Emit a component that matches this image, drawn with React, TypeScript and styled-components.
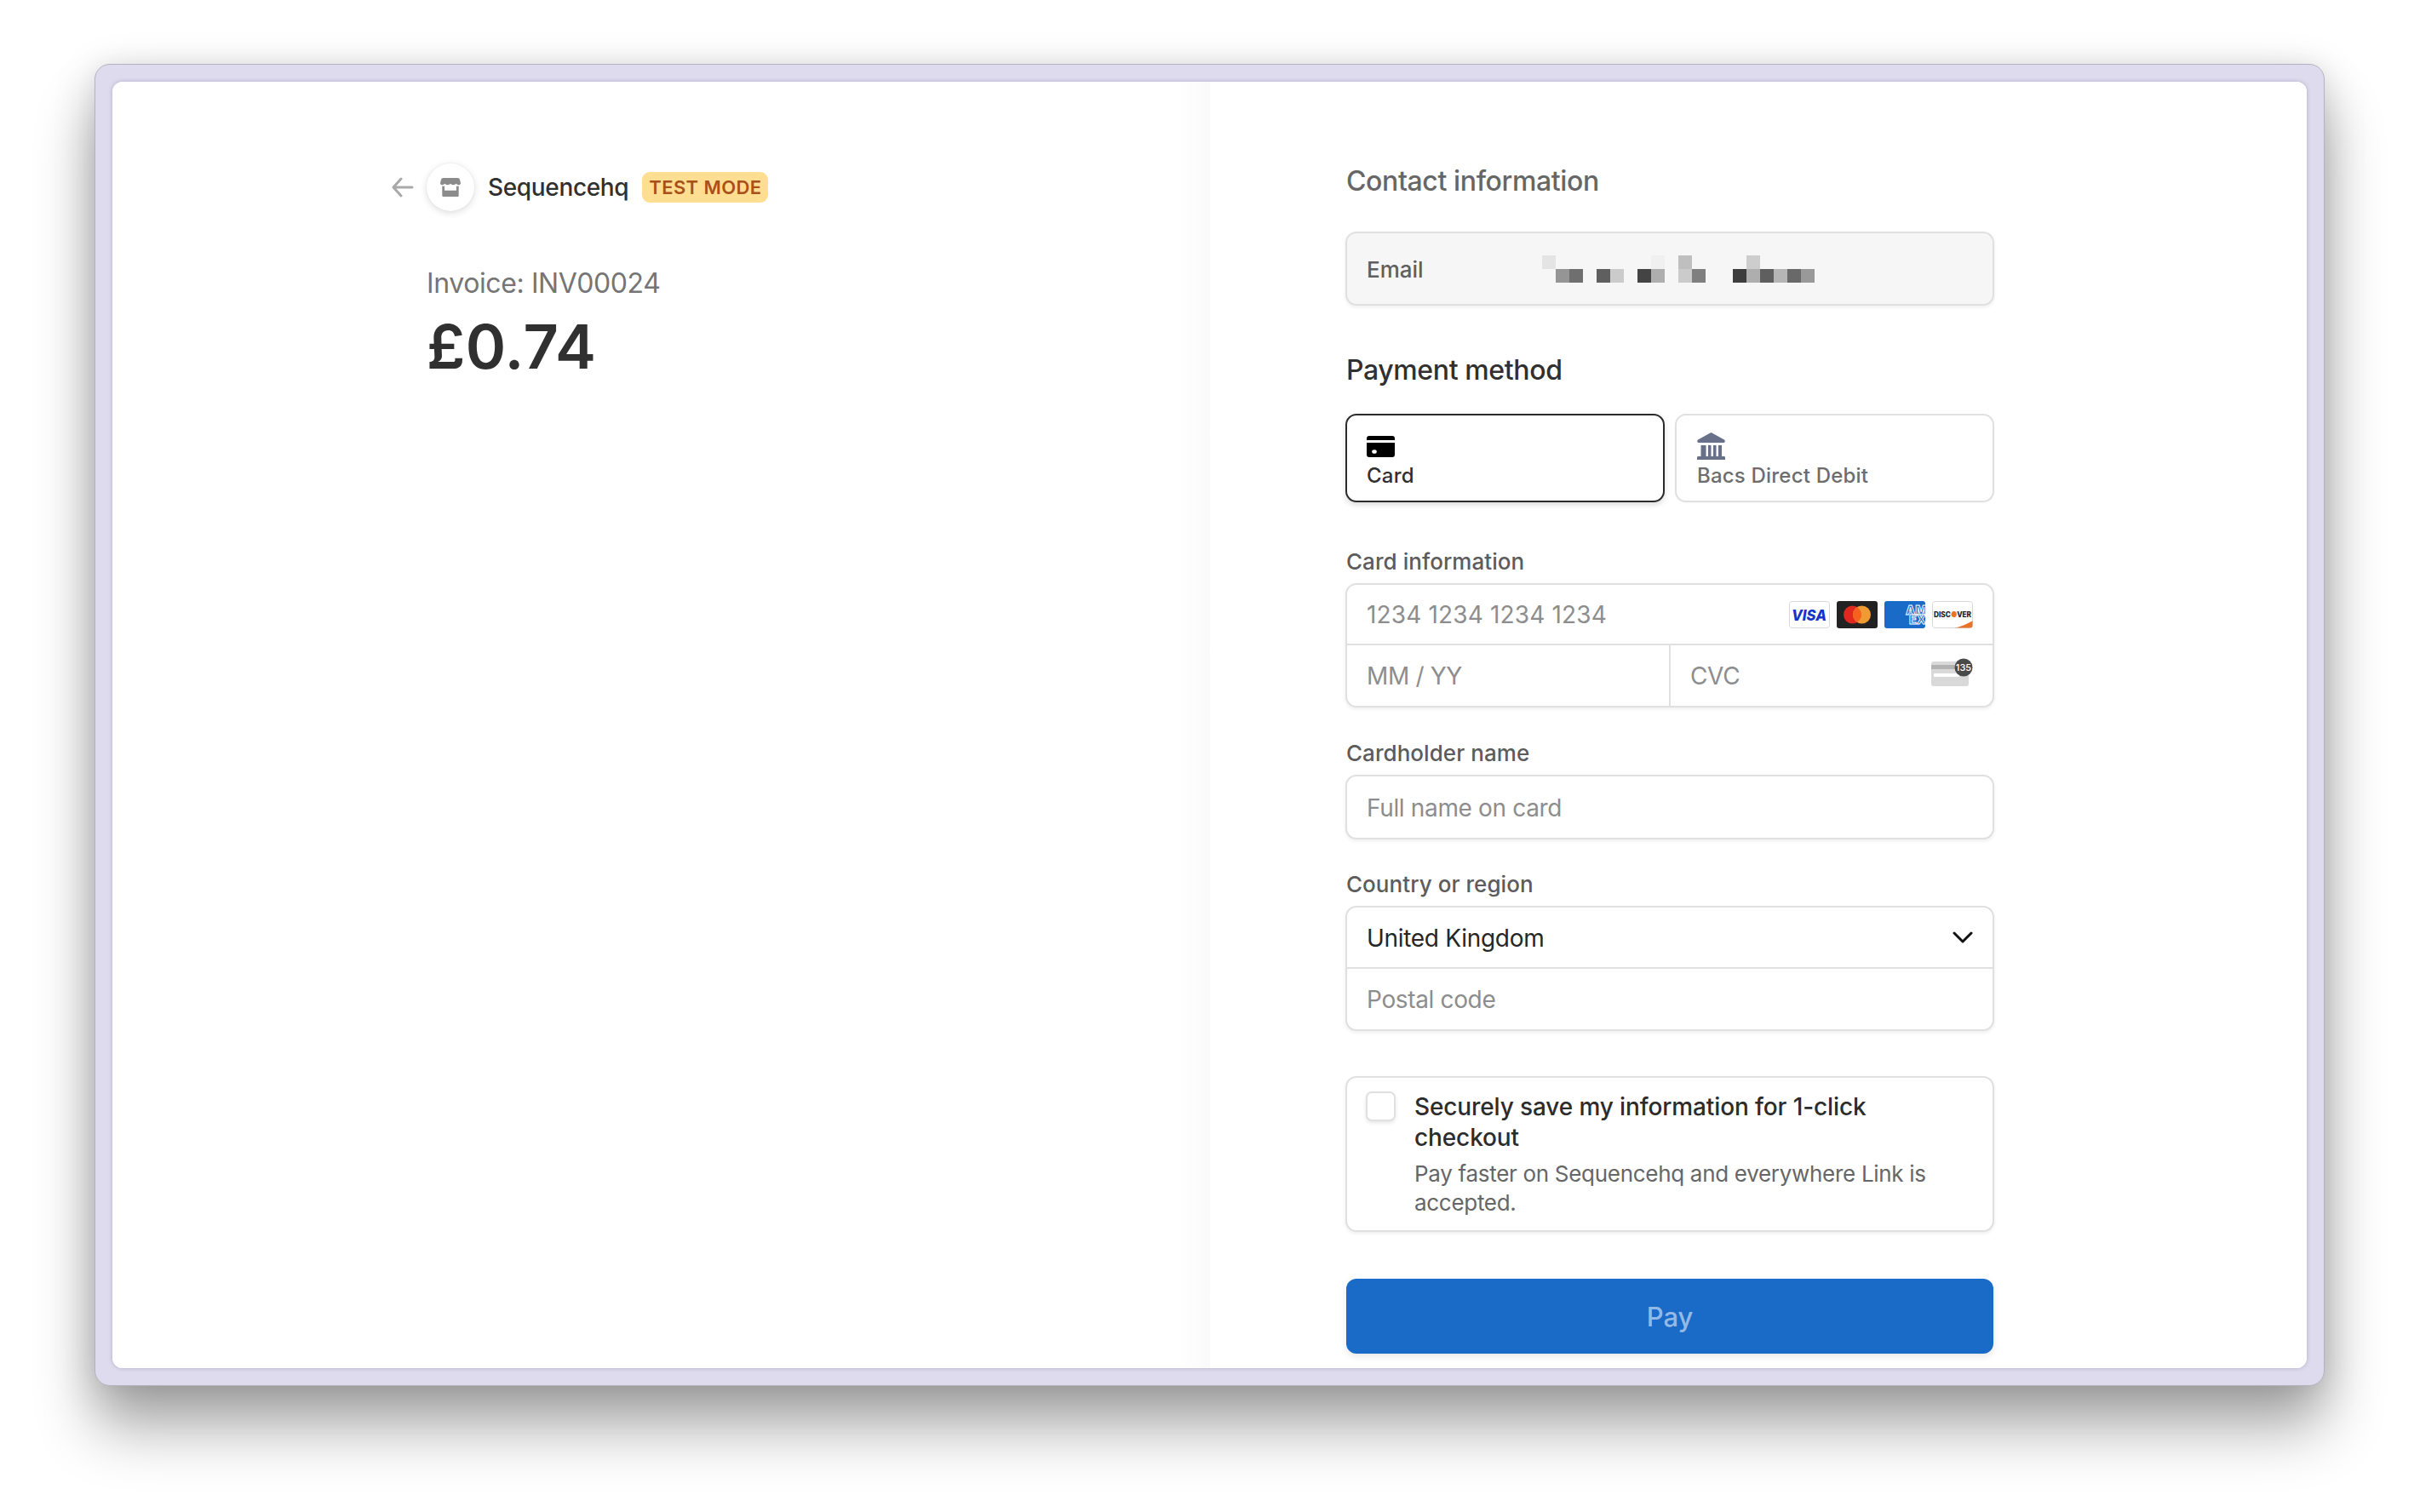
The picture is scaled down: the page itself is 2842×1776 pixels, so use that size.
import React from "react";
import styled, { createGlobalStyle } from "styled-components";

const Global = createGlobalStyle`
  html, body { margin: 0; padding: 0; background: #fff; }
  * { box-sizing: border-box; }
  body { font-family: Inter, "Liberation Sans", sans-serif; -webkit-font-smoothing: antialiased; }
`;

const Page = styled.div`
  width: 2842px;
  height: 1776px;
  padding: 75px 112px 148px 111px;
  background: #fff;
  overflow: hidden;
`;

const Frame = styled.div`
  height: 100%;
  padding: 20px;
  background: #dfdbee;
  border: 1px solid #b4b2bc;
  border-radius: 18px;
  box-shadow: 0 50px 70px rgba(0, 0, 0, 0.32), 0 10px 52px rgba(0, 0, 0, 0.14), 0 0 26px rgba(0, 0, 0, 0.05);
`;

const Sheet = styled.div`
  height: 100%;
  display: grid;
  grid-template-columns: 1289px 1fr;
  background: #fff;
  border-radius: 12px;
  overflow: hidden;
  box-shadow: 0 0 5px rgba(70, 60, 110, 0.3);
`;

const Summary = styled.section`
  padding: 96px 0 0 328px;
  background: linear-gradient(to right, #fff calc(100% - 38px), #fafafa 100%);
`;

const Merchant = styled.div`
  display: flex;
  align-items: center;
  height: 56px;
`;

const Back = styled.span`
  display: flex;
  width: 26px;
  margin-right: 15px;
  color: #a9a9a9;
`;

const Avatar = styled.span`
  display: flex;
  align-items: center;
  justify-content: center;
  width: 56px;
  height: 56px;
  border-radius: 50%;
  background: #fff;
  box-shadow: 0 2px 8px rgba(0, 0, 0, 0.14), 0 0 2px rgba(0, 0, 0, 0.06);
`;

const MerchantName = styled.span`
  margin-left: 16px;
  font-size: 28px;
  line-height: 36px;
  font-weight: 450;
  letter-spacing: -0.35px;
  color: #303030;
`;

const Badge = styled.span`
  margin-left: 16px;
  height: 36px;
  padding: 0 8px;
  border-radius: 9px;
  background: #ffde92;
  color: #a9501a;
  font-size: 22px;
  line-height: 36px;
  font-weight: 600;
  letter-spacing: 0.4px;
`;

const Invoice = styled.div`
  margin: 63px 0 0 41px;
  font-size: 32px;
  line-height: 44px;
  letter-spacing: -0.4px;
  color: #757575;
`;

const Amount = styled.div`
  margin: 8px 0 0 41px;
  font-size: 72px;
  line-height: 88px;
  font-weight: 600;
  letter-spacing: 0.4px;
  color: #303030;
`;

const Checkout = styled.section`
  padding: 97px 0 0 159px;
  background: #fff;
`;

const Form = styled.div`
  width: 762px;
`;

const Heading = styled.h2<{ $muted?: boolean; $top: number }>`
  margin: ${(p) => p.$top}px 0 0 1px;
  font-size: 32px;
  line-height: 40px;
  font-weight: 450;
  letter-spacing: -0.38px;
  color: ${(p) => (p.$muted ? "#666666" : "#303030")};
`;

const Label = styled.div<{ $top: number }>`
  margin: ${(p) => p.$top}px 0 9px 1px;
  font-size: 26px;
  line-height: 32px;
  font-weight: 450;
  letter-spacing: 0.05px;
  color: #5c5c5c;
`;

const Box = styled.div`
  border: 2px solid #e0e0e0;
  border-radius: 13px;
  background: #fff;
  overflow: hidden;
  box-shadow: 0 2px 4px rgba(0, 0, 0, 0.07);
`;

const EmailBox = styled(Box)`
  display: flex;
  align-items: center;
  height: 87px;
  margin-top: 39px;
  padding-left: 23px;
  background: #f6f6f6;
`;

const EmailLabel = styled.span`
  width: 206px;
  padding-top: 2px;
  font-size: 26px;
  font-weight: 450;
  color: #5f5f5f;
`;

const Mosaic = styled.div`
  display: grid;
  grid-template-columns: repeat(20, 16px);
  grid-auto-rows: 16px;
`;

const Pixel = styled.span<{ $c: string }>`
  background: ${(p) => p.$c};
`;

const Tabs = styled.div`
  display: grid;
  grid-template-columns: 375px 375px;
  gap: 12px;
  margin-top: 31px;
`;

const Tab = styled.div<{ $active?: boolean }>`
  display: flex;
  flex-direction: column;
  height: 104px;
  padding: ${(p) => (p.$active ? "24px 0 0 23px" : "20px 0 0 24px")};
  border: 2px solid ${(p) => (p.$active ? "#2b2b2b" : "#e0e0e0")};
  border-radius: 13px;
  background: #fff;
  box-shadow: ${(p) => (p.$active ? "0 3px 6px rgba(0,0,0,.14)" : "0 1px 2px rgba(0,0,0,.03)")};
  color: ${(p) => (p.$active ? "#303030" : "#6d6d6d")};
`;

const TabText = styled.span<{ $active?: boolean }>`
  margin-top: ${(p) => (p.$active ? "6px" : "2px")};
  font-size: 24px;
  line-height: 32px;
  font-weight: 450;
  letter-spacing: 0.2px;
`;

const Row = styled.div<{ $h: number; $line?: boolean }>`
  display: flex;
  align-items: center;
  height: ${(p) => p.$h}px;
  ${(p) => (p.$line ? "border-bottom: 2px solid #e0e0e0;" : "")}
`;

const Cell = styled.div<{ $line?: boolean }>`
  display: flex;
  align-items: center;
  flex: 1;
  height: 100%;
  padding: 0 14px 0 23px;
  ${(p) => (p.$line ? "border-right: 2px solid #e0e0e0;" : "")}
`;

const Placeholder = styled.span<{ $digits?: boolean }>`
  flex: 1;
  padding-top: 1px;
  font-size: 28px;
  color: #8d8d8d;
  letter-spacing: ${(p) => (p.$digits ? "0.15px" : "-0.35px")};
`;

const Value = styled.span`
  flex: 1;
  padding-top: 2px;
  font-size: 28px;
  font-weight: 400;
  color: #262626;
  letter-spacing: -0.3px;
`;

const Brands = styled.div`
  display: flex;
  gap: 8px;
  margin-right: 9px;
`;

const SaveBox = styled(Box)`
  display: flex;
  height: 183px;
  margin-top: 53px;
  padding: 16px 0 0 22px;
`;

const Tick = styled.span`
  flex: none;
  width: 35px;
  height: 35px;
  border: 2px solid #e0e0e0;
  border-radius: 7px;
  background: #fff;
  box-shadow: 0 2px 4px rgba(0, 0, 0, 0.1);
`;

const SaveText = styled.div`
  margin-left: 22px;
  width: 630px;
`;

const SaveTitle = styled.div`
  font-size: 28px;
  line-height: 36px;
  font-weight: 450;
  letter-spacing: -0.12px;
  color: #2c2c2c;
`;

const SaveNote = styled.div`
  margin-top: 8px;
  font-size: 26px;
  line-height: 34px;
  letter-spacing: -0.3px;
  color: #666;
`;

const Pay = styled.button`
  display: block;
  width: 760px;
  height: 88px;
  margin: 55px 0 0 1px;
  border: 0;
  border-radius: 12px;
  background: #1a6ac8;
  color: rgba(255, 255, 255, 0.55);
  font-family: inherit;
  font-size: 31px;
  font-weight: 450;
  box-shadow: 0 3px 8px rgba(0, 0, 0, 0.1);
`;

const CvcArt = styled.svg`
  margin: 0 8px 7px 0;
`;

const ChevronArt = styled.svg`
  margin-right: 9px;
`;

const TOP = ["#e4e4e4", "", "", "", "", "", "", "", "#f0f0f0", "", "#bfbfbf", "", "", "", "", "#cdcdcd", "", "", "", ""];
const BOTTOM = ["", "#959595", "#6f6f6f", "", "#5f5f5f", "#cbcbcb", "", "#444444", "#aeaeae", "", "#cbcbcb", "#7f7f7f", "", "", "#3d3d3d", "#aeaeae", "#5f5f5f", "#b5b5b5", "#696969", "#999999"];

const Arrow = () => (
  <svg width="26" height="24" viewBox="0 0 26 24" fill="none" stroke="currentColor" strokeWidth="3" strokeLinecap="round" strokeLinejoin="round">
    <path d="M24 12H2M11 2 2 12l9 10" />
  </svg>
);

const Store = () => (
  <svg width="24" height="24" viewBox="0 0 26 26" fill="#8b8b8b">
    <path d="M4 1h18c1.6 0 2.6 1 3 2.4L26 7.500c0 1.600-1.200 2.500-2.600 2.500-1.300 0-2.300-.7-3.200-1.600-1 .9-1.900 1.600-3.600 1.600s-2.600-.7-3.600-1.600c-1 .9-1.900 1.600-3.600 1.600s-2.600-.7-3.600-1.600c-.9.9-1.900 1.600-3.200 1.600C1.200 10 0 9.100 0 7.500L1 3.400C1.400 2 2.400 1 4 1Z" />
    <path d="M2.500 11.500c1 .3 2 .2 3-.2V17h15v-5.700c1 .4 2 .5 3 .2V23.500c0 .8-.7 1.500-1.500 1.500H4c-.8 0-1.500-.7-1.500-1.500Z" />
  </svg>
);

const CardIcon = () => (
  <svg width="33" height="25" viewBox="0 0 33 25">
    <path d="M3 0h27a3 3 0 0 1 3 3v2H0V3a3 3 0 0 1 3-3ZM0 8h33v14a3 3 0 0 1-3 3H3a3 3 0 0 1-3-3Z" fill="#000" />
    <ellipse cx="9" cy="18.500" rx="2.800" ry="2.300" fill="#fff" />
  </svg>
);

const BankIcon = () => (
  <svg width="33" height="33" viewBox="0 0 33 33" fill="#68708a">
    <path d="M16.500 0 32 8.500c1 .6 1 3.500-.5 3.500h-30C0 12 0 9.100 1 8.500Z" />
    <path d="M4.500 15h6v13h-6ZM13 15h3.500v13H13ZM19 15h3.500v13H19ZM25 15h4v13h-4ZM1.500 28h30c1 0 1.500.5 1.500 1.500V32H0v-2.500C0 28.500.5 28 1.500 28Z" />
  </svg>
);

const Visa = () => (
  <svg width="48" height="32" viewBox="0 0 48 32">
    <rect x=".5" y=".5" width="47" height="31" rx="3" fill="#fff" stroke="#d8d8d8" />
    <text x="3" y="22.500" textLength="41" lengthAdjust="spacingAndGlyphs" fontFamily="Inter, sans-serif" fontSize="18" fontWeight="800" fontStyle="italic" fill="#1434cb">VISA</text>
  </svg>
);

const Master = () => (
  <svg width="48" height="32" viewBox="0 0 48 32">
    <rect width="48" height="32" rx="3" fill="#222" />
    <circle cx="18.500" cy="16" r="10.500" fill="#e0281f" />
    <circle cx="29.500" cy="16" r="10.500" fill="#f09a33" />
    <path d="M24 7.060a10.500 10.500 0 0 1 0 17.880 10.500 10.500 0 0 1 0-17.880Z" fill="#f5611e" />
  </svg>
);

const Amex = () => (
  <svg width="48" height="32" viewBox="0 0 48 32">
    <defs>
      <clipPath id="amexClip"><rect width="48" height="32" rx="3" /></clipPath>
    </defs>
    <g clipPath="url(#amexClip)">
      <rect width="48" height="32" fill="#1a6ac8" />
      <text x="25" y="15.500" fontFamily="Inter, sans-serif" fontSize="14.500" fontWeight="800" fill="#1a6ac8" stroke="#fff" strokeWidth=".9">AM</text>
      <text x="29" y="26.500" fontFamily="Inter, sans-serif" fontSize="14.500" fontWeight="800" fill="#1a6ac8" stroke="#fff" strokeWidth=".9">EX</text>
    </g>
  </svg>
);

const Discover = () => (
  <svg width="48" height="32" viewBox="0 0 48 32">
    <defs>
      <clipPath id="discClip"><rect x=".5" y=".5" width="47" height="31" rx="3" /></clipPath>
    </defs>
    <rect x=".5" y=".5" width="47" height="31" rx="3" fill="#fff" stroke="#d8d8d8" />
    <path d="M26 32c8-2 15-5 22-9v9Z" fill="#e8742a" clipPath="url(#discClip)" />
    <text x="2" y="18.500" textLength="44" lengthAdjust="spacingAndGlyphs" fontFamily="Inter, sans-serif" fontSize="8.500" fontWeight="800" fill="#222">DISC<tspan fill="#e8742a">●</tspan>VER</text>
  </svg>
);

const Cvc = () => (
  <CvcArt width="50" height="34" viewBox="0 0 50 34">
    <rect x="0" y="4" width="44" height="29" rx="3" fill="#d9d9d9" />
    <rect x="0" y="8" width="44" height="5" fill="#b3b3b3" />
    <rect x="3" y="18" width="30" height="4" rx="1" fill="#fff" />
    <circle cx="38" cy="11" r="10.500" fill="#4a4a4a" />
    <text x="38" y="15" textAnchor="middle" fontFamily="Inter, sans-serif" fontSize="11" fontWeight="500" fill="#fff">135</text>
  </CvcArt>
);

const Chevron = () => (
  <ChevronArt width="24" height="14" viewBox="0 0 24 14" fill="none" stroke="#111" strokeWidth="3" strokeLinecap="round" strokeLinejoin="round">
    <path d="M2 2l10 10L22 2" />
  </ChevronArt>
);

export default function App() {
  return (
    <Page>
      <Global />
      <Frame>
        <Sheet>
          <Summary>
            <Merchant>
              <Back><Arrow /></Back>
              <Avatar><Store /></Avatar>
              <MerchantName>Sequencehq</MerchantName>
              <Badge>TEST MODE</Badge>
            </Merchant>
            <Invoice>Invoice: INV00024</Invoice>
            <Amount>£0.74</Amount>
          </Summary>
          <Checkout>
            <Form>
              <Heading $muted $top={0}>Contact information</Heading>
              <EmailBox>
                <EmailLabel>Email</EmailLabel>
                <Mosaic>
                  {[...TOP, ...BOTTOM].map((c, i) => (
                    <Pixel key={i} $c={c || "transparent"} />
                  ))}
                </Mosaic>
              </EmailBox>
              <Heading $top={56}>Payment method</Heading>
              <Tabs>
                <Tab $active>
                  <CardIcon />
                  <TabText $active>Card</TabText>
                </Tab>
                <Tab>
                  <BankIcon />
                  <TabText>Bacs Direct Debit</TabText>
                </Tab>
              </Tabs>
              <Label $top={54}>Card information</Label>
              <Box>
                <Row $h={71} $line>
                  <Cell>
                    <Placeholder $digits>1234 1234 1234 1234</Placeholder>
                    <Brands>
                      <Visa />
                      <Master />
                      <Amex />
                      <Discover />
                    </Brands>
                  </Cell>
                </Row>
                <Row $h={71}>
                  <Cell $line><Placeholder>MM / YY</Placeholder></Cell>
                  <Cell>
                    <Placeholder>CVC</Placeholder>
                    <Cvc />
                  </Cell>
                </Row>
              </Box>
              <Label $top={38}>Cardholder name</Label>
              <Box>
                <Row $h={72}>
                  <Cell><Placeholder>Full name on card</Placeholder></Cell>
                </Row>
              </Box>
              <Label $top={37}>Country or region</Label>
              <Box>
                <Row $h={72} $line>
                  <Cell>
                    <Value>United Kingdom</Value>
                    <Chevron />
                  </Cell>
                </Row>
                <Row $h={71}>
                  <Cell><Placeholder>Postal code</Placeholder></Cell>
                </Row>
              </Box>
              <SaveBox>
                <Tick />
                <SaveText>
                  <SaveTitle>Securely save my information for 1-click checkout</SaveTitle>
                  <SaveNote>Pay faster on Sequencehq and everywhere Link is accepted.</SaveNote>
                </SaveText>
              </SaveBox>
              <Pay>Pay</Pay>
            </Form>
          </Checkout>
        </Sheet>
      </Frame>
    </Page>
  );
}
